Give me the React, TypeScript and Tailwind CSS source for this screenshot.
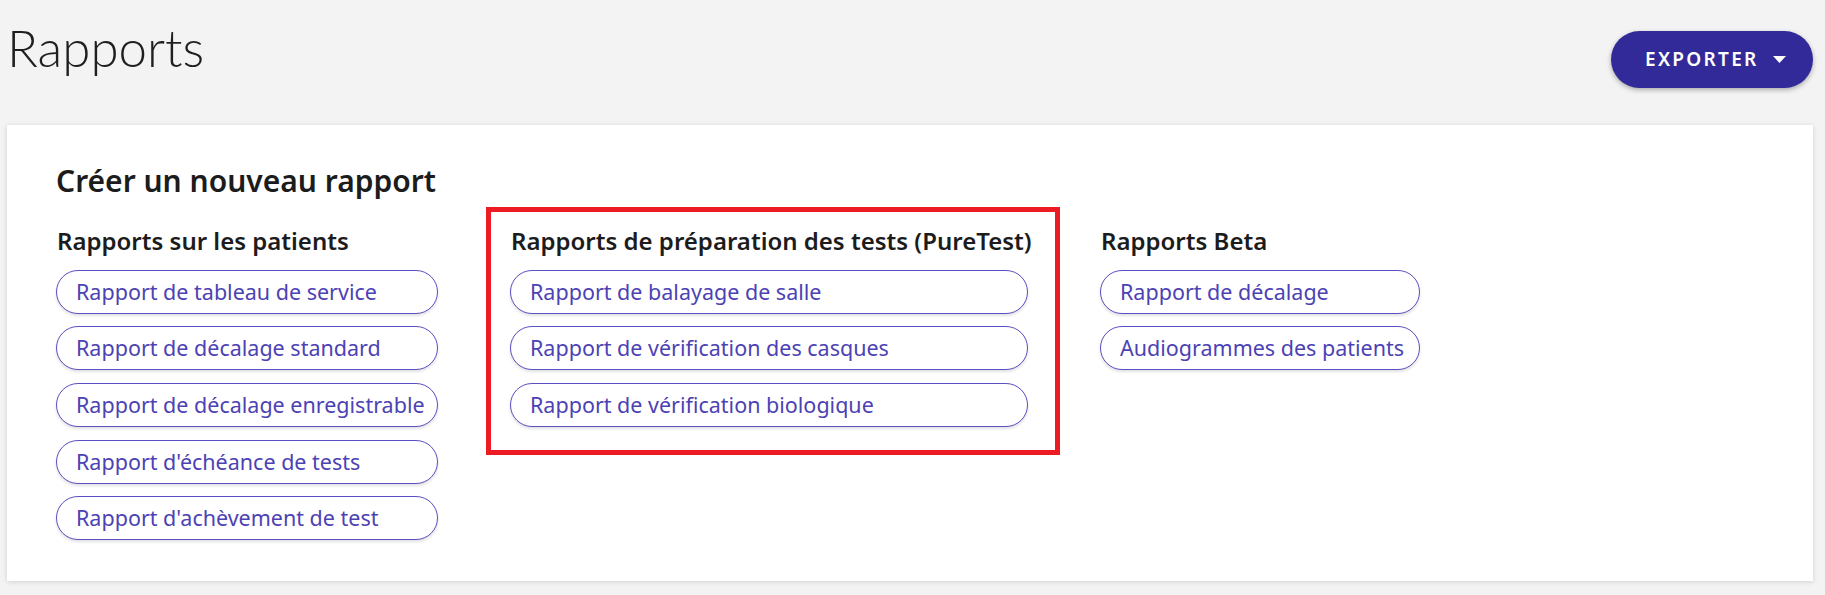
const columns = [
  {
    title: 'Rapports sur les patients',
    width: 'w-[382px]',
    items: [
      'Rapport de tableau de service',
      'Rapport de décalage standard',
      'Rapport de décalage enregistrable',
      "Rapport d'échéance de tests",
      "Rapport d'achèvement de test",
    ],
  },
  {
    title: 'Rapports de préparation des tests (PureTest)',
    width: 'w-[518px]',
    highlighted: true,
    items: [
      'Rapport de balayage de salle',
      'Rapport de vérification des casques',
      'Rapport de vérification biologique',
    ],
  },
  {
    title: 'Rapports Beta',
    width: 'w-[320px]',
    items: ['Rapport de décalage', 'Audiogrammes des patients'],
  },
];

function ReportColumn({ col }: { col: (typeof columns)[number] }) {
  return (
    <div className={`relative flex flex-col ${col.width}`}>
      {/* annotation box */}
      {col.highlighted && (
        <div className="pointer-events-none absolute -top-[18px] -bottom-[28px] -left-[24px] -right-[32px] border-[5px] border-[#ed1c24]" />
      )}
      <h3 className="mb-[12.5px] whitespace-nowrap pl-px text-[24px] font-semibold leading-[32px] text-[#1c1c1c]">
        {col.title}
      </h3>
      <div className="flex flex-col gap-[12.7px]">
        {col.items.map((item) => (
          <button
            key={item}
            className="flex h-[44px] w-full items-center whitespace-nowrap rounded-full border border-[#5a50c2] bg-white pl-[19px] text-left text-[21.5px] leading-[28px] text-[#4c42b4] shadow-[0_2px_3px_rgba(0,0,0,0.12)]"
          >
            {item}
          </button>
        ))}
      </div>
    </div>
  );
}

export default function App() {
  return (
    <div className="min-h-[595px] bg-[#f3f3f3] pl-[7px] pr-[12px] pt-[22px] pb-[12px] font-['Noto_Sans',sans-serif]">
      {/* Header */}
      <div className="flex items-start justify-between">
        <h1 className="font-['Lato',sans-serif] text-[51px] font-light leading-[51px] text-[#1f1f1f]">
          Rapports
        </h1>
        <button className="mt-[9px] flex h-[57px] w-[202px] items-center rounded-full bg-[#332a99] pl-[34px] text-[19px] font-semibold tracking-[2.3px] text-white shadow-[0_2px_5px_rgba(0,0,0,0.3)]">
          EXPORTER
          <svg viewBox="0 0 13 7" className="ml-[14px] h-[7px] w-[13px]" fill="white">
            <path d="M0 0h13L6.5 7z" />
          </svg>
        </button>
      </div>

      {/* Card */}
      <div className="mt-[37px] bg-white px-[49px] pt-[38px] pb-[41px] shadow-[0_1px_5px_rgba(0,0,0,0.14)]">
        <h2 className="text-[30px] font-semibold leading-[36px] text-[#1c1c1c]">
          Créer un nouveau rapport
        </h2>
        <div className="mt-[26px] flex items-start gap-[72px]">
          {columns.map((col) => (
            <ReportColumn key={col.title} col={col} />
          ))}
        </div>
      </div>
    </div>
  );
}
